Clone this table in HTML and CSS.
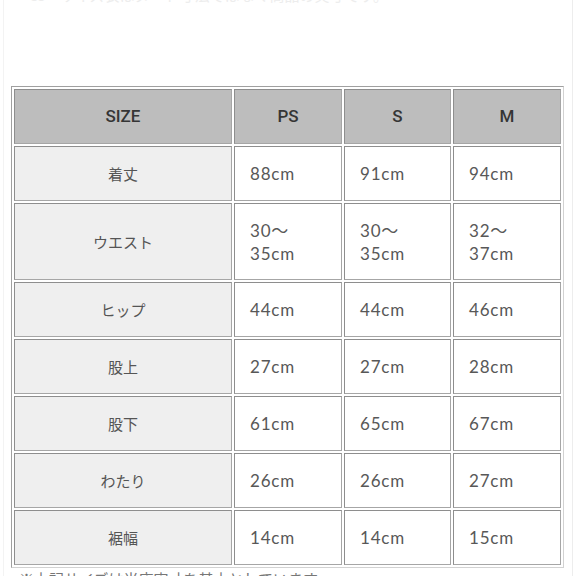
FILE: index.html
```html
<!DOCTYPE html>
<html lang="ja">
<head>
<meta charset="utf-8">
<title>Size chart</title>
<link rel="stylesheet" href="styles.css">
</head>
<body>
<div class="page">
  <p class="top-note">ss　サイズ表はヌード寸法ではなく商品の実寸です。</p>
  <table class="size-table">
    <colgroup>
      <col class="c-label">
      <col class="c-size">
      <col class="c-size c-mid">
      <col class="c-size">
    </colgroup>
    <thead>
      <tr>
        <th>SIZE</th>
        <th>PS</th>
        <th>S</th>
        <th>M</th>
      </tr>
    </thead>
    <tbody>
      <tr>
        <td class="label">着丈</td>
        <td>88cm</td>
        <td>91cm</td>
        <td>94cm</td>
      </tr>
      <tr class="tall">
        <td class="label">ウエスト</td>
        <td>30～<br>35cm</td>
        <td>30～<br>35cm</td>
        <td>32～<br>37cm</td>
      </tr>
      <tr>
        <td class="label">ヒップ</td>
        <td>44cm</td>
        <td>44cm</td>
        <td>46cm</td>
      </tr>
      <tr>
        <td class="label">股上</td>
        <td>27cm</td>
        <td>27cm</td>
        <td>28cm</td>
      </tr>
      <tr>
        <td class="label">股下</td>
        <td>61cm</td>
        <td>65cm</td>
        <td>67cm</td>
      </tr>
      <tr>
        <td class="label">わたり</td>
        <td>26cm</td>
        <td>26cm</td>
        <td>27cm</td>
      </tr>
      <tr>
        <td class="label">裾幅</td>
        <td>14cm</td>
        <td>14cm</td>
        <td>15cm</td>
      </tr>
    </tbody>
  </table>
  <p class="note">※上記サイズは当店実寸を基本としています。</p>
</div>
</body>
</html>
```

FILE: styles.css
```css
html, body {
  margin: 0;
  padding: 0;
  background: #ffffff;
}

body {
  font-family: "Lato", "Noto Sans CJK JP", sans-serif;
  color: #555555;
  overflow: hidden;
  height: 576px;
}

.page {
  margin: 0 3px;
  border-left: 1px solid #f3f3f3;
  border-right: 1px solid #ededed;
  padding: 0 0 0 7px;
  height: 576px;
  box-sizing: border-box;
  overflow: hidden;
}

.top-note {
  margin: -14px 0 0 20px;
  font-family: "Noto Sans CJK JP", sans-serif;
  font-size: 15px;
  line-height: 17px;
  color: #ededed;
  height: 17px;
}

.size-table {
  margin-top: 83px;
  width: 553px;
  table-layout: fixed;
  border-collapse: separate;
  border-spacing: 2px;
  border: 1px solid #d2d2d2;
  border-top-color: #a0a0a0;
  border-left-color: #a0a0a0;
}

.c-label {
  width: 218px;
}

.c-size {
  width: 108px;
}

.c-mid {
  width: 107px;
}

.size-table th,
.size-table td {
  border: 1px solid #8e8e8e;
  border-right-color: #a6a6a6;
  border-bottom-color: #a6a6a6;
  height: 53px;
  padding: 0 15px;
  line-height: 23px;
  vertical-align: middle;
}

.size-table th {
  background: #bdbdbd;
  color: #353535;
  font-family: "Roboto", "Liberation Sans", sans-serif;
  font-weight: 500;
  font-size: 17px;
  text-align: center;
}

.size-table td {
  background: #ffffff;
  color: #585858;
  font-size: 17px;
  letter-spacing: 0.8px;
  text-align: left;
}

.size-table td.label {
  background: #efefef;
  text-align: center;
  font-family: "Noto Sans CJK JP", sans-serif;
  font-size: 15px;
  letter-spacing: 0;
  color: #555555;
}

.size-table tr.tall td {
  height: 75px;
}

.note {
  margin: 0 0 0 8px;
  font-family: "Noto Sans CJK JP", sans-serif;
  font-size: 15px;
  line-height: 22px;
  color: #777777;
  white-space: nowrap;
}
```
